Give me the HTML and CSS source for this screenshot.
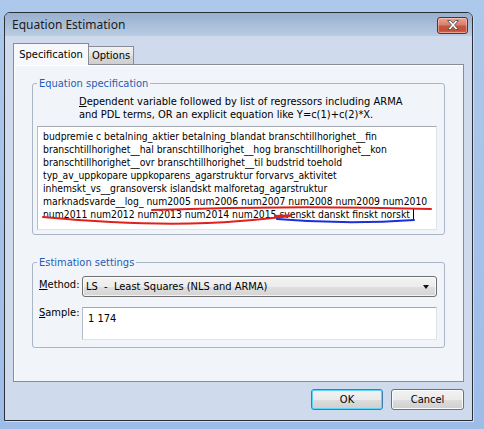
FILE: index.html
```html
<!DOCTYPE html>
<html lang="en">
<head>
    <meta charset="UTF-8">
    <title>Equation Estimation</title>
    <link rel="stylesheet" href="styles.css">
</head>
<body>
    <div class="window">
        <div class="titlebar">
            <span class="title">Equation Estimation</span>
            <div class="close-btn">
                <svg width="12" height="10" viewBox="0 0 12 10">
                    <polygon points="0.5,0.5 3.5,0.5 6,3.3 8.5,0.5 11.5,0.5 7.6,5 11.5,9.5 8.5,9.5 6,6.7 3.5,9.5 0.5,9.5 4.4,5" fill="#fff" stroke="#5c5c5c" stroke-width="1"/>
                </svg>
            </div>
        </div>
        <div class="client">
            <div class="tabs">
                <div class="tab active">Specification</div>
                <div class="tab">Options</div>
            </div>
            <div class="tab-panel">
                <div class="group">
                    <div class="group-title">Equation specification</div>
                    <p class="hint"><u>D</u>ependent variable followed by list of regressors including ARMA<br>and PDL terms, OR an explicit equation like Y=c(1)+c(2)*X.</p>
                    <div class="spec-box">
                        <div>budpremie c betalning_aktier betalning_blandat branschtillhorighet__fin</div>
                        <div>branschtillhorighet__hal branschtillhorighet__hog branschtillhorighet__kon</div>
                        <div>branschtillhorighet__ovr branschtillhorighet__til budstrid toehold</div>
                        <div>typ_av_uppkopare uppkoparens_agarstruktur forvarvs_aktivitet</div>
                        <div>inhemskt_vs__gransoversk islandskt malforetag_agarstruktur</div>
                        <div>marknadsvarde__log_ num2005 num2006 num2007 num2008 num2009 num2010</div>
                        <div>num2011 num2012 num2013 num2014 num2015 svenskt danskt finskt norskt <span class="caret"></span></div>
                        <!-- pen marks over the regressor list -->
                        <svg class="marks" width="400" height="104" viewBox="0 0 400 104">
                            <path d="M115 84 Q253 79 394 83" class="mark-red"/>
                            <path d="M6 91 Q123 102 203 95 T238 90" class="mark-red"/>
                            <path d="M240 93 Q308 99 377 94" class="mark-blue"/>
                        </svg>
                    </div>
                </div>

                <div class="group settings-group">
                    <div class="group-title">Estimation settings</div>
                    <div class="row method-row">
                        <label><u>M</u>ethod:</label>
                        <div class="select">
                            <span>LS&nbsp;&nbsp;-&nbsp;&nbsp;Least Squares (NLS and ARMA)</span>
                            <span class="arrow"></span>
                        </div>
                    </div>
                    <div class="row sample-row">
                        <label><u>S</u>ample:</label>
                        <div class="sample-box">1 174</div>
                    </div>
                </div>
            </div>
            <div class="buttons">
                <button class="btn default">OK</button>
                <button class="btn">Cancel</button>
            </div>
        </div>
    </div>
</body>
</html>
```

FILE: styles.css
```css
body {
    margin: 0;
    padding: 12px 0 0 4px;
    height: 429px;
    box-sizing: border-box;
    overflow: hidden;
    background: linear-gradient(#acc8ea, #9dbce8);
    font-family: "DejaVu Sans Condensed", "DejaVu Sans", sans-serif;
    font-size: 11px;
    color: #000;
}
.window {
    width: 469px;
    height: 409px;
    box-sizing: border-box;
    border: 1px solid #2b3038;
    border-radius: 6px 6px 0 0;
    background: #cfdbec;
    display: flex;
    flex-direction: column;
    box-shadow: 1px 1px 0 #c4e2f3;
}
.titlebar {
    height: 23px;
    flex: none;
    display: flex;
    align-items: center;
    justify-content: space-between;
    padding: 0 4px 0 7px;
    border-radius: 5px 5px 0 0;
    background: linear-gradient(#97b0cf, #b9cce3);
}
.title {
    font-family: "Noto Sans", sans-serif;
    font-size: 12px;
    color: #1b1b1b;
}
.close-btn {
    width: 31px;
    height: 17px;
    box-sizing: border-box;
    margin-top: 1px;
    border: 1px solid #6e2a22;
    border-radius: 3px;
    background: linear-gradient(#e9a596, #d7806e 45%, #c5553f 55%, #c2503a 85%, #d57660);
    box-shadow: inset 0 0 0 1px rgba(255, 215, 205, 0.5);
    display: flex;
    align-items: center;
    justify-content: center;
}
.client {
    flex: 1;
    padding: 7px 8px 0 8px;
}

/* tabs */
.tabs {
    display: flex;
    align-items: flex-end;
    height: 21px;
}
.tab {
    box-sizing: border-box;
    height: 18px;
    width: 45px;
    border: 1px solid #898c95;
    border-left: none;
    border-bottom: none;
    background: linear-gradient(#f2f2f2, #e3e3e3 50%, #d9d9d9 51%, #cfcfcf);
    text-align: center;
    line-height: 17px;
}
.tab.active {
    position: relative;
    z-index: 1;
    width: 76px;
    height: 22px;
    margin-bottom: -1px;
    border-left: 1px solid #898c95;
    background: #f6f8fb;
    line-height: 21px;
}
.tab-panel {
    box-sizing: border-box;
    height: 318px;
    border: 1px solid #898c95;
    background: #f1f4f9;
    box-shadow: inset 1px 1px 0 #fff;
    padding: 18px 18px 0 18px;
}

/* group boxes */
.group {
    border: 1px solid #aab5c5;
    border-radius: 3px;
    padding: 0 7px 4px 4px;
}
.group-title {
    width: max-content;
    margin: -7px 0 0 0;
    padding: 0 2px;
    line-height: 13px;
    background: #f1f4f9;
    color: #1f5cb6;
}
.hint {
    margin: 5px 0 0 42px;
    line-height: 13px;
}
.spec-box {
    position: relative;
    box-sizing: border-box;
    height: 104px;
    margin-top: 5px;
    padding: 3px 0 0 5px;
    border: 1px solid #dfe3ea;
    border-top-color: #a4a8b0;
    border-left-color: #b8bcc4;
    background: #fff;
    font-size: 10.3px;
    line-height: 13px;
    white-space: nowrap;
}
.caret {
    display: inline-block;
    width: 1px;
    height: 12px;
    background: #000;
    vertical-align: -2px;
}
.marks {
    position: absolute;
    left: -1px;
    top: -1px;
    overflow: visible;
    pointer-events: none;
}
.marks path {
    fill: none;
    stroke-width: 2;
    stroke-linecap: round;
}
.mark-red {
    stroke: #e0201c;
}
.mark-blue {
    stroke: #1c2fd8;
}

.settings-group {
    margin-top: 27px;
    padding-bottom: 7px;
}
.row {
    display: flex;
    align-items: flex-start;
    padding-left: 2px;
}
.row label {
    width: 43px;
    flex: none;
    line-height: 13px;
}
.method-row {
    margin-top: 7px;
}
.method-row label {
    margin-top: 2px;
}
.sample-row {
    margin-top: 10px;
}
.sample-row label {
    margin-top: -1px;
}
.select {
    flex: 1;
    box-sizing: border-box;
    height: 21px;
    display: flex;
    align-items: center;
    justify-content: space-between;
    padding: 0 7px 0 3px;
    border: 1px solid #707070;
    border-radius: 3px;
    background: linear-gradient(#f4f4f4, #ececec 50%, #e0e0e0 51%, #d4d4d4);
    box-shadow: inset 0 0 0 1px rgba(255, 255, 255, 0.7);
}
.arrow {
    width: 0;
    height: 0;
    border-left: 3.5px solid transparent;
    border-right: 3.5px solid transparent;
    border-top: 4px solid #111;
}
.sample-box {
    flex: 1;
    box-sizing: border-box;
    height: 33px;
    padding: 4px 0 0 5px;
    border: 1px solid #dfe3ea;
    border-top-color: #a4a8b0;
    border-left-color: #b8bcc4;
    background: #fff;
    line-height: 13px;
}

/* dialog buttons */
.buttons {
    display: flex;
    justify-content: flex-end;
    gap: 8px;
    margin-top: 7px;
}
.btn {
    width: 73px;
    height: 21px;
    padding: 0;
    font-family: inherit;
    font-size: 11px;
    color: #000;
    border: 1px solid #707070;
    border-radius: 3px;
    background: linear-gradient(#f2f2f2, #ebebeb 50%, #dddddd 51%, #cfcfcf);
    box-shadow: inset 0 0 0 1px #fbfbfb;
}
.btn.default {
    width: 72px;
    border-color: #3c7fb1;
    box-shadow: inset 0 0 0 1px #5fd4fb;
}
```
